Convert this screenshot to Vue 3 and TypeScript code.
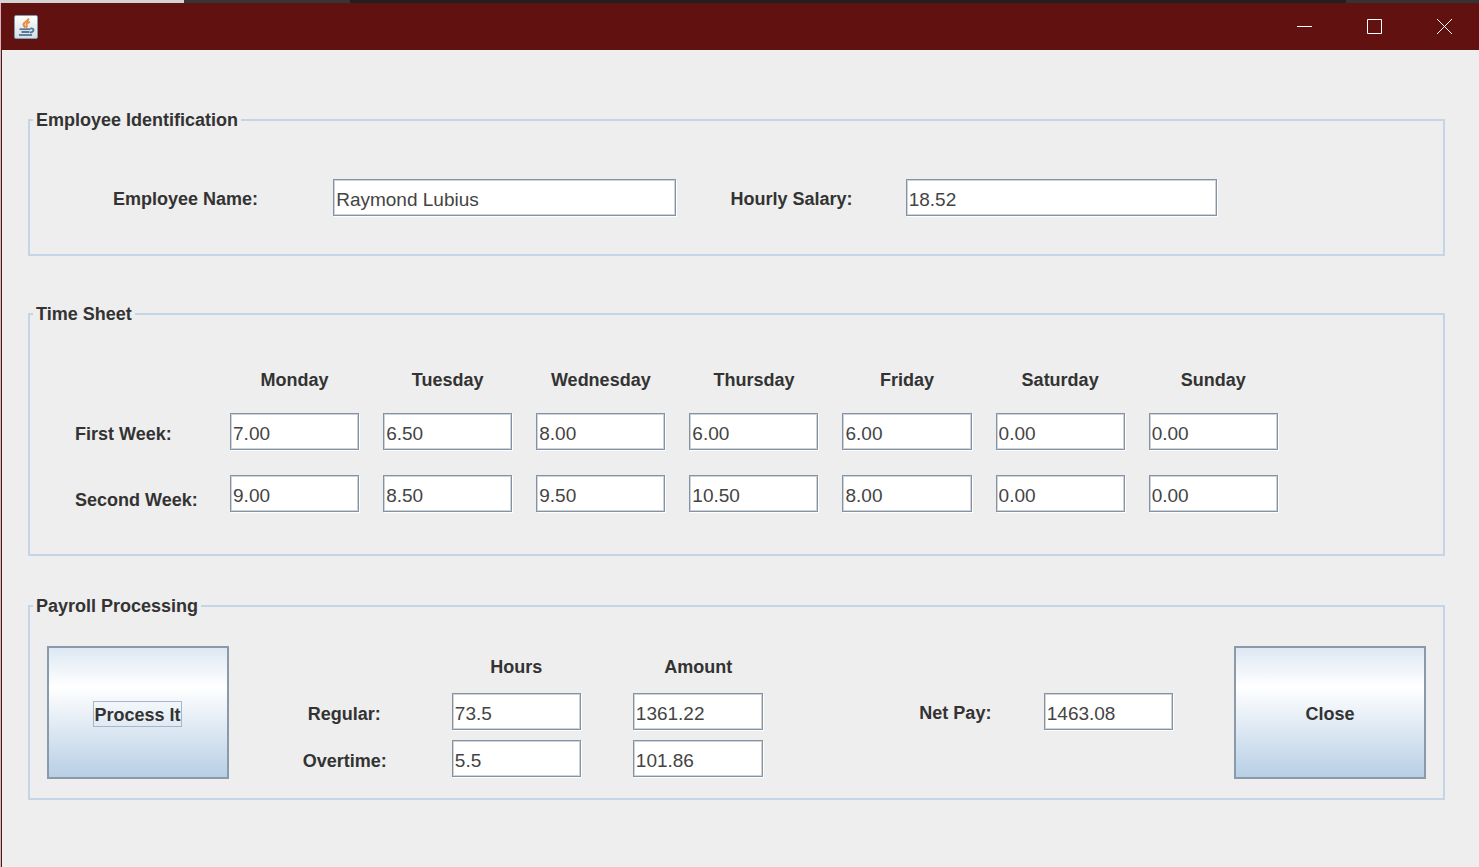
<script setup lang="ts">
import { reactive } from 'vue'

const days: string[] = ['Monday', 'Tuesday', 'Wednesday', 'Thursday', 'Friday', 'Saturday', 'Sunday']

interface Week {
  name: string
  hours: string[]
}

interface PayLine {
  name: string
  hours: string
  amount: string
}

const employee = reactive({ name: 'Raymond Lubius', salary: '18.52' })

const weeks = reactive<Week[]>([
  { name: 'First Week:', hours: ['7.00', '6.50', '8.00', '6.00', '6.00', '0.00', '0.00'] },
  { name: 'Second Week:', hours: ['9.00', '8.50', '9.50', '10.50', '8.00', '0.00', '0.00'] },
])

const payLines = reactive<PayLine[]>([
  { name: 'Regular:', hours: '73.5', amount: '1361.22' },
  { name: 'Overtime:', hours: '5.5', amount: '101.86' },
])

const totals = reactive({ netPay: '1463.08' })

function processPayroll(): void {
  const rate = Number(employee.salary)
  let regular = 0
  let overtime = 0
  for (const week of weeks) {
    const worked = week.hours.reduce((sum, h) => sum + Number(h), 0)
    regular += Math.min(worked, 40)
    overtime += Math.max(worked - 40, 0)
  }
  const regularPay = regular * rate
  const overtimePay = overtime * rate
  payLines[0].hours = String(regular)
  payLines[0].amount = regularPay.toFixed(2)
  payLines[1].hours = String(overtime)
  payLines[1].amount = overtimePay.toFixed(2)
  totals.netPay = (regularPay + overtimePay).toFixed(2)
}
</script>

<template>
  <div class="desktop">
    <div class="window">
      <header class="titlebar">
        <svg class="java" viewBox="0 0 24 24" aria-hidden="true">
          <defs>
            <linearGradient id="tile" x1="0" y1="0" x2="0" y2="1">
              <stop offset="0" stop-color="#ffffff" />
              <stop offset="1" stop-color="#d5dde4" />
            </linearGradient>
          </defs>
          <rect x="0.5" y="0.5" width="23" height="23" rx="1.5" fill="url(#tile)" stroke="#7f9bb0" />
          <path d="M14.200 3.500c.8 2.800-4.600 3.600-4.700 6 0 1.300 1.400 2 2 3" fill="none" stroke="#ea8a3c" stroke-width="2.200" />
          <path d="M16 6.800c-2.600 1-4 2.100-3.300 3.400.5.900.5 1.600-.6 2.600" fill="none" stroke="#e98b45" stroke-width="1.800" />
          <path d="M5.500 14.200h11" fill="none" stroke="#54789a" stroke-width="1.800" />
          <path d="M7.500 17h8" fill="none" stroke="#54789a" stroke-width="2" />
          <path d="M16.300 13.600c4.400-1 4.400 3-.3 4" fill="none" stroke="#54789a" stroke-width="1.700" />
          <path d="M5 20h13" fill="none" stroke="#54789a" stroke-width="1.800" />
        </svg>
        <div class="controls">
          <button type="button" aria-label="Minimize">
            <svg viewBox="0 0 16 16"><path d="M1 7.500h15" /></svg>
          </button>
          <button type="button" aria-label="Maximize">
            <svg viewBox="0 0 16 16"><path d="M1.500 .5h14v14h-14z" /></svg>
          </button>
          <button type="button" aria-label="Close window">
            <svg viewBox="0 0 16 16"><path d="M1 0l15 15M16 0L1 15" /></svg>
          </button>
        </div>
      </header>

      <main class="content">
        <fieldset class="group">
          <legend>Employee Identification</legend>
          <div class="identity">
            <label for="emp-name">Employee Name:</label>
            <input id="emp-name" v-model="employee.name" class="field" type="text" />
            <label for="salary" class="salary-label">Hourly Salary:</label>
            <input id="salary" v-model="employee.salary" class="field" type="text" />
          </div>
        </fieldset>

        <fieldset class="group sheet-group">
          <legend>Time Sheet</legend>
          <div class="sheet">
            <table class="hours-table">
              <thead>
                <tr>
                  <td class="corner"></td>
                  <th v-for="day in days" :key="day" scope="col">{{ day }}</th>
                </tr>
              </thead>
              <tbody>
                <tr v-for="week in weeks" :key="week.name">
                  <th scope="row">{{ week.name }}</th>
                  <td v-for="(day, i) in days" :key="day">
                    <input v-model="week.hours[i]" class="field" type="text" :aria-label="week.name + ' ' + day" />
                  </td>
                </tr>
              </tbody>
            </table>
          </div>
        </fieldset>

        <fieldset class="group pay-group">
          <legend>Payroll Processing</legend>
          <div class="payroll">
            <button type="button" class="action process" @click="processPayroll">
              <span class="focus-ring">Process It</span>
            </button>
            <table class="pay-table">
              <thead>
                <tr>
                  <td class="corner"></td>
                  <th scope="col">Hours</th>
                  <th scope="col">Amount</th>
                </tr>
              </thead>
              <tbody>
                <tr v-for="line in payLines" :key="line.name">
                  <th scope="row">{{ line.name }}</th>
                  <td><input v-model="line.hours" class="field" type="text" :aria-label="line.name + ' hours'" /></td>
                  <td><input v-model="line.amount" class="field" type="text" :aria-label="line.name + ' amount'" /></td>
                </tr>
              </tbody>
            </table>
            <div class="net">
              <label for="net-pay">Net Pay:</label>
              <input id="net-pay" v-model="totals.netPay" class="field" type="text" />
            </div>
            <button type="button" class="action close">Close</button>
          </div>
        </fieldset>
      </main>
    </div>
  </div>
</template>

<style>
body {
  margin: 0;
  background: #eeeeee;
}
</style>

<style scoped>
.desktop {
  box-sizing: border-box;
  min-height: 100vh;
  padding-top: 3px;
  background: linear-gradient(90deg, #d4d4d4 184px, #353436 184px, #353436 350px, #201f21 350px, #201f21 91%, #343335 91%);
  font-family: "Liberation Sans", Arial, sans-serif;
  font-size: 18px;
  line-height: 22px;
  color: #333333;
}

.window {
  box-sizing: border-box;
  min-height: calc(100vh - 3px);
  border-left: 1px solid #d9b3ba;
  box-shadow: inset 1px 0 #4a1c20;
  background: #eeeeee;
}

.titlebar {
  display: flex;
  align-items: center;
  justify-content: space-between;
  height: 47px;
  padding-left: 13px;
  background: #621111;
}

.java {
  width: 24px;
  height: 24px;
}

.controls {
  display: flex;
  height: 100%;
}

.controls button {
  display: flex;
  align-items: center;
  justify-content: center;
  width: 70px;
  padding: 0;
  border: 0;
  background: transparent;
}

.controls svg {
  width: 16px;
  height: 16px;
  fill: none;
  stroke: #ffffff;
  stroke-width: 1;
}

.content {
  display: flex;
  flex-direction: column;
  padding: 59px 34px 48px 27px;
}

.group {
  min-width: 0;
  margin: 0;
  padding: 0;
  border: 2px solid #c5d5e7;
}

.sheet-group {
  margin-top: 47px;
}

.pay-group {
  margin-top: 39px;
}

legend {
  margin-left: 3px;
  padding: 0 3px;
  font-weight: bold;
}

label,
th {
  font-weight: bold;
  white-space: nowrap;
}

label {
  padding-top: 3px;
}

.field {
  box-sizing: border-box;
  display: block;
  width: 100%;
  min-width: 0;
  height: 37px;
  margin: 0;
  padding: 4px 2px 0;
  border: 1px solid #8492a1;
  border-radius: 0;
  outline: none;
  background: #ffffff;
  box-shadow: inset 0 0 0 1px #ccd3da, 1px 1px 0 #ffffff;
  font-family: inherit;
  font-size: 19px;
  color: #444444;
}

.identity {
  display: grid;
  grid-template-columns: 220fr 343fr 229fr 311fr;
  align-items: center;
  padding: 48px 16% 38px 83px;
}

.salary-label {
  padding-left: 54px;
}

.sheet {
  display: grid;
  grid-template-columns: 45fr 1226fr 141fr;
  padding: 44px 0 41px;
}

.sheet table {
  grid-column: 2;
}

table {
  width: 100%;
  table-layout: fixed;
  border-collapse: collapse;
}

th,
td {
  padding: 0;
  text-align: center;
  vertical-align: top;
}

.hours-table th,
.hours-table td {
  padding-right: 24px;
}

.hours-table .corner {
  width: 155px;
  padding-right: 0;
}

.hours-table thead th {
  height: 44px;
}

.hours-table tbody th {
  padding-right: 0;
  padding-top: 10px;
  text-align: left;
}

.hours-table tbody tr + tr th {
  padding-top: 14px;
}

.hours-table tbody td {
  height: 62px;
}

.hours-table tbody tr:last-child td {
  height: 38px;
}

.payroll {
  display: grid;
  grid-template-columns: 182fr 74fr 461fr 156fr 254fr 61fr 192fr;
  padding: 29px 17px 19px;
}

.process {
  grid-column: 1;
}

.pay-table {
  grid-column: 3;
  align-self: start;
}

.net {
  grid-column: 5;
  display: grid;
  grid-template-columns: 124fr 129fr;
  align-items: center;
  align-self: start;
  padding-top: 47px;
}

.close {
  grid-column: 7;
}

.action {
  min-height: 133px;
  padding: 2px 0 0;
  border: 2px solid #8b9aaa;
  border-radius: 0;
  background: linear-gradient(180deg, #dde8f3 0%, #ffffff 30%, #b8cfe5 100%);
  font-family: inherit;
  font-size: 18px;
  font-weight: bold;
  line-height: 22px;
  color: #333333;
}

.focus-ring {
  display: inline-block;
  padding: 2px 1px 0 0;
  border: 1px solid #a3b8cc;
}

.pay-table .corner {
  width: 149px;
}

.pay-table thead th {
  height: 37px;
  padding-top: 10px;
}

.pay-table th:nth-child(2),
.pay-table td:nth-child(2) {
  width: 129px;
  padding-right: 52px;
}

.pay-table tbody th {
  padding: 10px 66px 0 0;
}

.pay-table tbody td {
  height: 47px;
}

.pay-table tbody tr:last-child td {
  height: 38px;
}
</style>
